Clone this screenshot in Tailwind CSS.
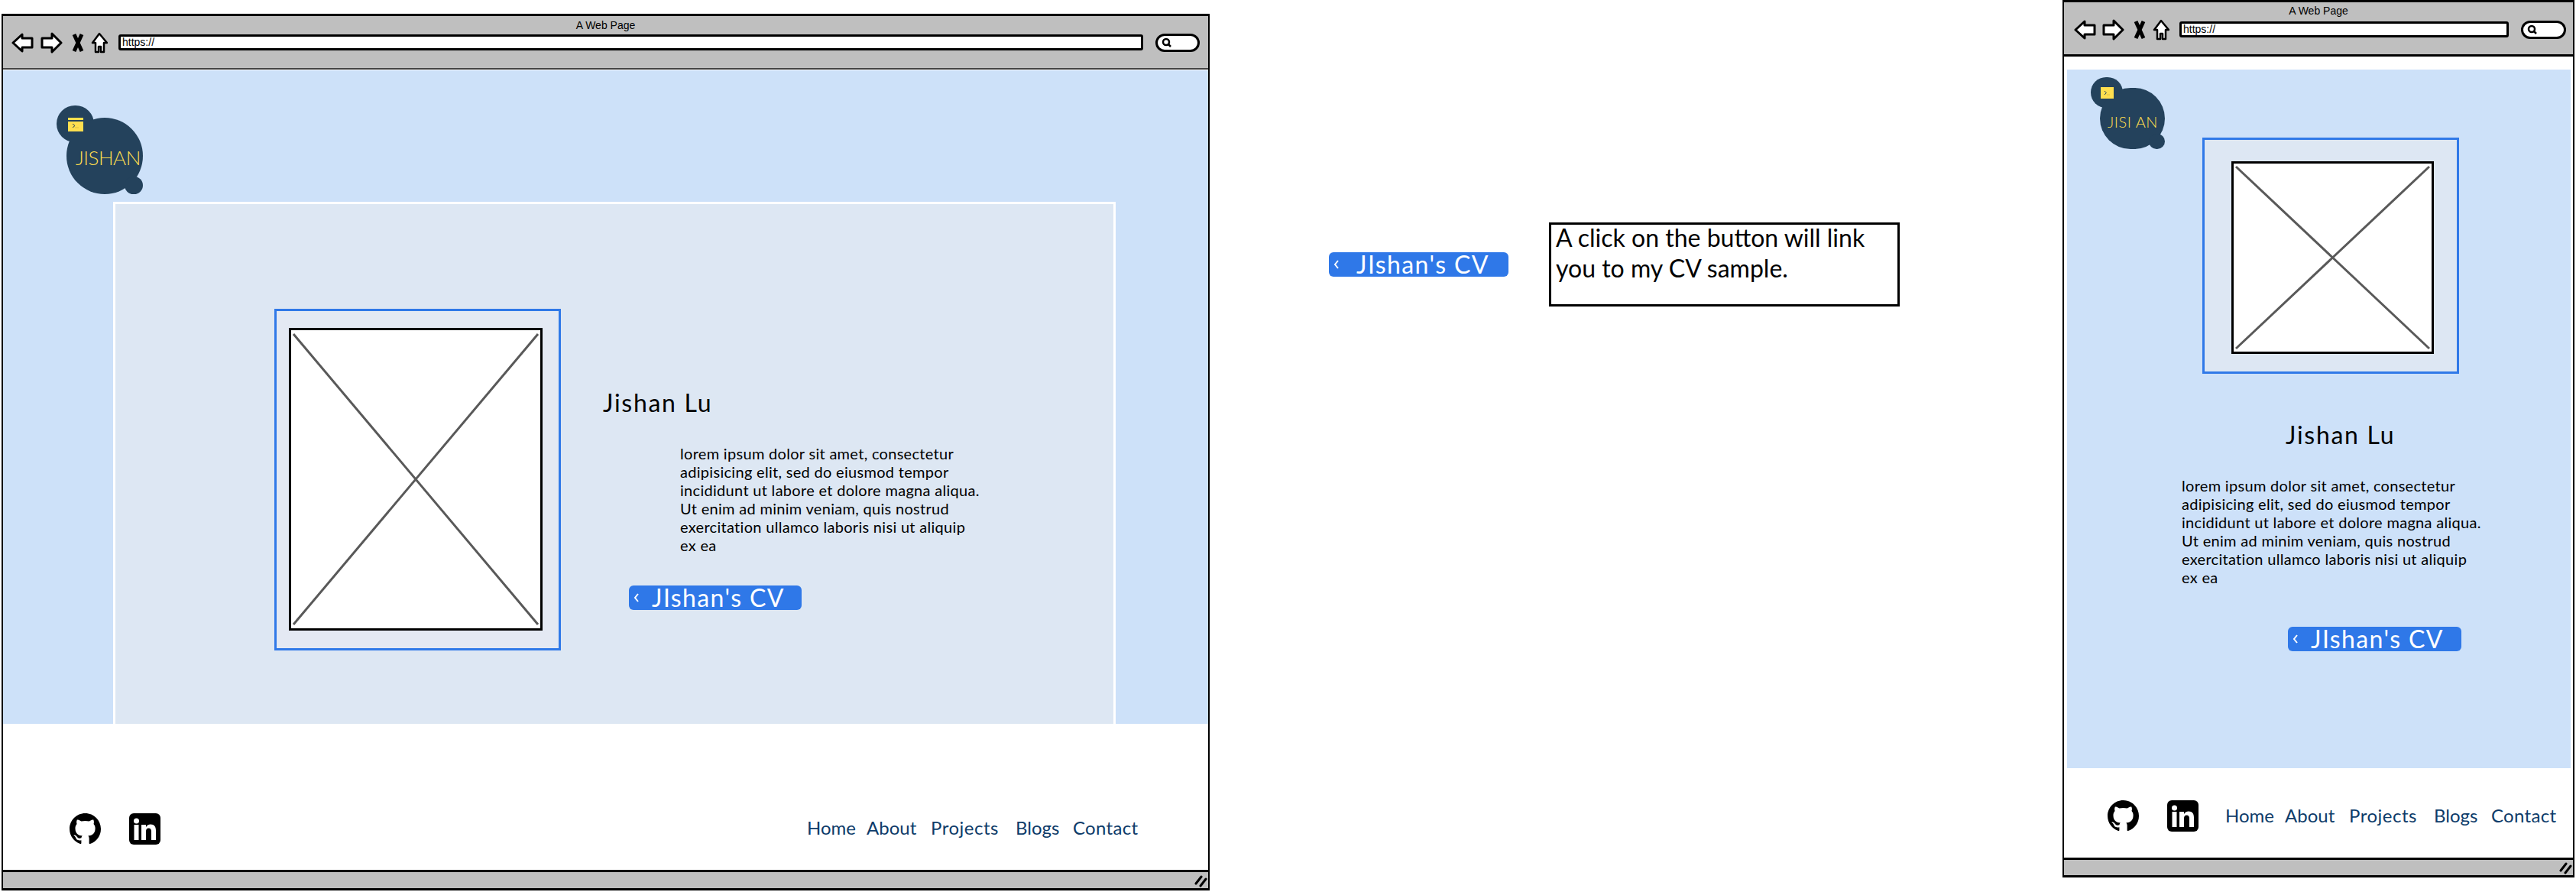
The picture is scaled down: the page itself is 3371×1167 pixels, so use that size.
<!doctype html>
<html lang="en">
<head>
<meta charset="utf-8">
<title>Jishan wireframe</title>
<script src="https://cdn.jsdelivr.net/npm/@tailwindcss/browser@4"></script>
</head>
<body class="bg-white font-['Lato',sans-serif] text-black">
<div class="relative w-[3371px] h-[1167px] overflow-hidden bg-white">

<!-- Desktop window -->
<section class="absolute left-[2px] top-[18px] w-[1581px] h-[1147px] flex flex-col border-x-2 border-y-[3px] border-black">
  <header class="relative h-[70px] shrink-0 bg-[#bfbfbf] border-b-[2px] border-[#444]">
    <p class="absolute left-0 right-0 top-[3px] text-center text-[14px] leading-[18px] font-['Liberation_Sans',sans-serif]">A Web Page</p>
    <div class="flex items-center pl-[11px] pt-[19px] h-[50px]">
      <svg class="w-[29px] h-[26px]" viewBox="0 0 29 26"><path d="M14 2 2 13l12 11v-5h13V7H14z" fill="#fff" stroke="#000" stroke-width="3" stroke-linejoin="round"/></svg>
      <svg class="ml-[9px] w-[29px] h-[28px]" viewBox="0 0 29 28"><path d="M15 2l12 12-12 12v-6H2V8h13z" fill="#fff" stroke="#000" stroke-width="3" stroke-linejoin="round"/></svg>
      <svg class="ml-[12px] w-[16px] h-[26px]" viewBox="0 0 16 26"><path d="M3 2l10 22M13 2 3 24" fill="none" stroke="#000" stroke-width="5"/></svg>
      <svg class="ml-[9px] w-[22px] h-[28px]" viewBox="0 0 22 28"><path d="M11 2 2 14h4v12h4v-7h3v7h4V14h4z" fill="#fff" stroke="#000" stroke-width="2.5" stroke-linejoin="round"/></svg>
      <div class="ml-[14px] w-[1341px] h-[21px] bg-white border-[3px] border-black rounded-[3px] flex items-center pl-[2px] text-[14px] font-['Liberation_Sans',sans-serif]">https://</div>
      <div class="ml-[16px] w-[58px] h-[24px] bg-white border-[3px] border-black rounded-full flex items-center pl-[5px]">
        <svg class="w-[13px] h-[13px]" viewBox="0 0 13 13"><circle cx="6" cy="6" r="4" fill="none" stroke="#000" stroke-width="2.5"/><path d="m9 9 3 3" stroke="#000" stroke-width="2.5"/></svg>
      </div>
    </div>
  </header>
  <main class="mt-[1px] h-[855px] shrink-0 bg-[#cde1f9] pt-[46px]">
    <div class="relative ml-[70px] w-[113px] h-[116px]">
      <div class="absolute left-0 top-0 w-[49px] h-[48px] rounded-full bg-[#24425c]"></div>
      <div class="absolute left-[13px] top-[16px] w-[100px] h-[100px] rounded-full bg-[#24425c]"></div>
      <div class="absolute left-[89px] top-[93px] w-[24px] h-[23px] rounded-full bg-[#24425c]"></div>
      <div class="absolute left-[15px] top-[16px] w-[20px] h-[18px] flex flex-col gap-[2px]">
        <div class="h-[3px] bg-[#ffdf4f]"></div>
        <div class="flex-1 bg-[#ffdf4f] relative"><svg class="absolute left-0 top-0 w-[20px] h-[13px]" viewBox="0 0 20 13"><path d="m6 3 3 2.500-3 2.500" fill="none" stroke="#24425c" stroke-width="1"/><path d="M9 8h5" stroke="#e2c445" stroke-width="1"/></svg></div>
      </div>
      <p class="absolute left-[25px] top-[54px] text-[#ffdf4f] text-[26px] leading-[28px] font-light tracking-[-0.5px] whitespace-nowrap">JISHAN</p>
    </div>
    <div class="mt-[10px] ml-[144px] w-[1312px] h-[683px] bg-[#dde7f3] border-x-[3px] border-t-[3px] border-white flex items-start pl-[208px] pt-[137px]">
      <div class="w-[375px] h-[447px] shrink-0 bg-[#e4e9f3] border-[3px] border-[#3079e8] pl-[16px] pt-[22px]">
        <div class="w-[332px] h-[396px] bg-white border-[3px] border-black">
          <svg class="w-full h-full" viewBox="0 0 326 390" preserveAspectRatio="none"><path d="M3 5 323 385M323 5 3 385" stroke="#595959" stroke-width="3" fill="none"/></svg>
        </div>
      </div>
      <div class="ml-[55px] flex flex-col items-start pt-[105px]">
        <h1 class="text-[32px] leading-[36px] tracking-[1.700px] whitespace-nowrap">Jishan Lu</h1>
        <p class="ml-[101px] mt-[36px] text-[20px] leading-[24px] tracking-[0.3px] whitespace-nowrap">lorem ipsum dolor sit amet, consectetur<br>adipisicing elit, sed do eiusmod tempor<br>incididunt ut labore et dolore magna aliqua.<br>Ut enim ad minim veniam, quis nostrud<br>exercitation ullamco laboris nisi ut aliquip<br>ex ea</p>
        <a class="ml-[34px] mt-[41px] w-[226px] h-[32px] bg-[#2f78e8] rounded-[6px] flex items-center pl-[6px] text-white text-[32px] leading-[32px] tracking-[1.4px] whitespace-nowrap"><svg class="w-[8px] h-[12px] mr-[16px] shrink-0" viewBox="0 0 8 12"><path d="M6 1 2 6l4 5" fill="none" stroke="#fff" stroke-width="2"/></svg>JIshan's CV</a>
      </div>
    </div>
  </main>
  <footer class="flex-1 flex items-start pt-[117px]">
    <svg class="ml-[87px] w-[41px] h-[41px]" viewBox="0 0 16 16"><path fill="#000" d="M8 0C3.580 0 0 3.580 0 8c0 3.540 2.290 6.530 5.470 7.590.4.070.55-.17.55-.38 0-.19-.01-.82-.01-1.490-2.010.37-2.530-.49-2.690-.94-.09-.23-.48-.94-.82-1.130-.28-.15-.68-.52-.01-.53.63-.01 1.080.58 1.230.82.72 1.210 1.870.87 2.330.66.07-.52.28-.87.51-1.070-1.780-.2-3.640-.89-3.640-3.950 0-.87.31-1.590.82-2.150-.08-.2-.36-1.020.08-2.120 0 0 .67-.21 2.200.82.64-.18 1.320-.27 2-.27.68 0 1.360.09 2 .27 1.530-1.040 2.200-.82 2.200-.82.44 1.100.16 1.920.08 2.120.51.56.82 1.270.82 2.150 0 3.070-1.870 3.750-3.650 3.950.29.25.54.73.54 1.480 0 1.070-.01 1.930-.01 2.200 0 .21.15.46.55.38A8.013 8.013 0 0016 8c0-4.420-3.580-8-8-8z"/></svg>
    <svg class="ml-[37px] w-[41px] h-[41px]" viewBox="0 0 41 41"><rect width="41" height="41" rx="6" fill="#000"/><circle cx="9.500" cy="10" r="3.500" fill="#fff"/><rect x="6.500" y="15" width="6" height="20" fill="#fff"/><path d="M16 15h6v3c1.500-2.500 3.500-3.500 6-3.500 5 0 7 3 7 8V35h-6V24c0-3-1-4.500-3.500-4.500S22 21 22 24v11h-6z" fill="#fff"/></svg>
    <nav class="ml-[846px] mt-[2px] flex text-[24px] leading-[34px] text-[#0e3c6a] whitespace-nowrap">
      <a class="w-[78px]">Home</a><a class="w-[84px]">About</a><a class="w-[111px] tracking-[0.5px]">Projects</a><a class="w-[75px]">Blogs</a><a class="tracking-[0.3px]">Contact</a>
    </nav>
  </footer>
  <div class="relative h-[24px] shrink-0 bg-[#bfbfbf] border-t-[3px] border-black">
    <svg class="absolute right-[1px] bottom-[1px] w-[17px] h-[17px]" viewBox="0 0 17 17"><path d="M2 12 9 3M8 15l7-9" stroke="#000" stroke-width="3" stroke-linecap="round"/></svg>
  </div>
</section>

<!-- Annotation: button + note -->
<a class="absolute left-[1739px] top-[330px] w-[235px] h-[32px] bg-[#2f78e8] rounded-[6px] flex items-center pl-[6px] text-white text-[32px] leading-[32px] tracking-[1.4px] whitespace-nowrap"><svg class="w-[8px] h-[12px] mr-[22px] shrink-0" viewBox="0 0 8 12"><path d="M6 1 2 6l4 5" fill="none" stroke="#fff" stroke-width="2"/></svg>JIshan's CV</a>
<div class="absolute left-[2027px] top-[291px] w-[459px] h-[110px] border-[3px] border-black pl-[6px] text-[32px] leading-[40px] whitespace-nowrap"><div class="-mt-[3px]">A click on the button will link<br>you to my CV sample.</div></div>

<!-- Mobile window -->
<section class="absolute left-[2699px] top-[0px] w-[670px] h-[1148px] flex flex-col border-x-2 border-y-[3px] border-black">
  <header class="relative h-[71px] shrink-0 bg-[#bfbfbf] border-b-[3px] border-black">
    <p class="absolute left-0 right-0 top-[2px] text-center text-[14px] leading-[18px] font-['Liberation_Sans',sans-serif]">A Web Page</p>
    <div class="flex items-center pl-[13px] pt-[21px] h-[50px]">
      <svg class="w-[29px] h-[26px]" viewBox="0 0 29 26"><path d="M14 2 2 13l12 11v-5h13V7H14z" fill="#fff" stroke="#000" stroke-width="3" stroke-linejoin="round"/></svg>
      <svg class="ml-[8px] w-[29px] h-[28px]" viewBox="0 0 29 28"><path d="M15 2l12 12-12 12v-6H2V8h13z" fill="#fff" stroke="#000" stroke-width="3" stroke-linejoin="round"/></svg>
      <svg class="ml-[12px] w-[16px] h-[26px]" viewBox="0 0 16 26"><path d="M3 2l10 22M13 2 3 24" fill="none" stroke="#000" stroke-width="5"/></svg>
      <svg class="ml-[9px] w-[22px] h-[28px]" viewBox="0 0 22 28"><path d="M11 2 2 14h4v12h4v-7h3v7h4V14h4z" fill="#fff" stroke="#000" stroke-width="2.5" stroke-linejoin="round"/></svg>
      <div class="ml-[13px] w-[431px] h-[21px] bg-white border-[3px] border-black rounded-[3px] flex items-center pl-[2px] text-[14px] font-['Liberation_Sans',sans-serif]">https://</div>
      <div class="ml-[16px] w-[59px] h-[24px] bg-white border-[3px] border-black rounded-full flex items-center pl-[5px]">
        <svg class="w-[13px] h-[13px]" viewBox="0 0 13 13"><circle cx="6" cy="6" r="4" fill="none" stroke="#000" stroke-width="2.5"/><path d="m9 9 3 3" stroke="#000" stroke-width="2.5"/></svg>
      </div>
    </div>
  </header>
  <main class="relative mt-[17px] ml-[4px] w-[659px] h-[914px] shrink-0 bg-[#cde1f9] pt-[10px] flex flex-col items-start">
    <div class="relative ml-[31px] w-[97px] h-[94px]">
      <div class="absolute left-0 top-0 w-[42px] h-[40px] rounded-full bg-[#24425c]"></div>
      <div class="absolute left-[12px] top-[14px] w-[85px] h-[80px] rounded-full bg-[#24425c]"></div>
      <div class="absolute left-[76px] top-[74px] w-[21px] h-[20px] rounded-full bg-[#24425c]"></div>
      <div class="absolute left-[13px] top-[13px] w-[17px] h-[15px] bg-[#ffdf4f]"><svg class="w-[17px] h-[15px]" viewBox="0 0 17 15"><path d="m5 5 2.500 2.500-2.500 2.500" fill="none" stroke="#24425c" stroke-width="1"/><path d="M8 10h4" stroke="#e2c445" stroke-width="1"/></svg></div>
      <p class="absolute left-[22px] top-[47px] text-[#ffdf4f] text-[20px] leading-[22px] font-light tracking-[0.5px] whitespace-nowrap">JISI AN</p>
    </div>
    <div class="ml-[177px] -mt-[15px] w-[336px] h-[309px] shrink-0 bg-[#dde7f3] border-[3px] border-[#3079e8] pl-[35px] pt-[28px]">
      <div class="w-[265px] h-[252px] bg-white border-[3px] border-black">
        <svg class="w-full h-full" viewBox="0 0 259 246" preserveAspectRatio="none"><path d="M3 4 256 242M256 4 3 242" stroke="#595959" stroke-width="3" fill="none"/></svg>
      </div>
    </div>
    <h1 class="ml-[286px] mt-[62px] text-[32px] leading-[36px] tracking-[1.700px] whitespace-nowrap">Jishan Lu</h1>
    <p class="ml-[150px] mt-[36px] text-[20px] leading-[24px] tracking-[0.3px] whitespace-nowrap">lorem ipsum dolor sit amet, consectetur<br>adipisicing elit, sed do eiusmod tempor<br>incididunt ut labore et dolore magna aliqua.<br>Ut enim ad minim veniam, quis nostrud<br>exercitation ullamco laboris nisi ut aliquip<br>ex ea</p>
    <a class="ml-[289px] mt-[53px] w-[227px] h-[32px] bg-[#2f78e8] rounded-[6px] flex items-center pl-[6px] text-white text-[32px] leading-[32px] tracking-[1.4px] whitespace-nowrap"><svg class="w-[8px] h-[12px] mr-[16px] shrink-0" viewBox="0 0 8 12"><path d="M6 1 2 6l4 5" fill="none" stroke="#fff" stroke-width="2"/></svg>JIshan's CV</a>
  </main>
  <footer class="flex-1 flex items-start pt-[42px]">
    <svg class="ml-[57px] w-[41px] h-[41px]" viewBox="0 0 16 16"><path fill="#000" d="M8 0C3.580 0 0 3.580 0 8c0 3.540 2.290 6.530 5.470 7.590.4.070.55-.17.55-.38 0-.19-.01-.82-.01-1.490-2.010.37-2.530-.49-2.690-.94-.09-.23-.48-.94-.82-1.130-.28-.15-.68-.52-.01-.53.63-.01 1.080.58 1.230.82.72 1.210 1.870.87 2.330.66.07-.52.28-.87.51-1.070-1.780-.2-3.640-.89-3.640-3.950 0-.87.31-1.590.82-2.150-.08-.2-.36-1.020.08-2.120 0 0 .67-.21 2.200.82.64-.18 1.320-.27 2-.27.68 0 1.360.09 2 .27 1.530-1.040 2.200-.82 2.200-.82.44 1.100.16 1.920.08 2.120.51.56.82 1.270.82 2.150 0 3.070-1.870 3.750-3.650 3.950.29.25.54.73.54 1.480 0 1.070-.01 1.930-.01 2.200 0 .21.15.46.55.38A8.013 8.013 0 0016 8c0-4.420-3.580-8-8-8z"/></svg>
    <svg class="ml-[37px] w-[41px] h-[41px]" viewBox="0 0 41 41"><rect width="41" height="41" rx="6" fill="#000"/><circle cx="9.500" cy="10" r="3.500" fill="#fff"/><rect x="6.500" y="15" width="6" height="20" fill="#fff"/><path d="M16 15h6v3c1.500-2.500 3.500-3.500 6-3.500 5 0 7 3 7 8V35h-6V24c0-3-1-4.500-3.500-4.500S22 21 22 24v11h-6z" fill="#fff"/></svg>
    <nav class="ml-[35px] mt-[3px] flex text-[24px] leading-[34px] text-[#0e3c6a] whitespace-nowrap">
      <a class="w-[78px]">Home</a><a class="w-[84px]">About</a><a class="w-[111px] tracking-[0.5px]">Projects</a><a class="w-[75px]">Blogs</a><a class="tracking-[0.3px]">Contact</a>
    </nav>
  </footer>
  <div class="relative h-[23px] shrink-0 bg-[#bfbfbf] border-t-[3px] border-black">
    <svg class="absolute right-[1px] bottom-[1px] w-[17px] h-[17px]" viewBox="0 0 17 17"><path d="M2 12 9 3M8 15l7-9" stroke="#000" stroke-width="3" stroke-linecap="round"/></svg>
  </div>
</section>

</div>
</body>
</html>
